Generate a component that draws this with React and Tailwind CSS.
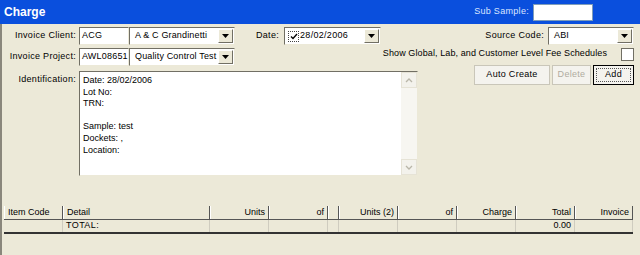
import React from 'react'

const font = { fontFamily: '"Liberation Sans", Arial, sans-serif' }

const Arrow = () => (
  <svg width="7" height="4" viewBox="0 0 7 4">
    <path d="M0 0h7L3.5 4z" fill="#000" />
  </svg>
)

const DropBtn = () => (
  <div className="w-[15px] h-full flex items-center justify-center bg-[#ece9d8] border border-t-white border-l-white border-b-[#716f64] border-r-[#716f64]">
    <Arrow />
  </div>
)

const Sunken = ({ className = '', children }) => (
  <div className={`bg-white border border-t-[#716f64] border-l-[#716f64] border-b-[#ece9d8] border-r-[#ece9d8] ${className}`}>
    {children}
  </div>
)

const Label = ({ children, className = '' }) => (
  <span className={`text-[9px] whitespace-nowrap text-black ${className}`}>{children}</span>
)

const Combo = ({ value, className = '' }) => (
  <Sunken className={`h-[18px] flex items-center p-[1px] ${className}`}>
    <span className="flex-1 pl-[4px] text-[9px] tracking-[0.15px] whitespace-nowrap overflow-hidden">{value}</span>
    <DropBtn />
  </Sunken>
)

const Input = ({ value, className = '' }) => (
  <Sunken className={`h-[18px] flex items-center pl-[2px] text-[9px] tracking-[0.2px] whitespace-nowrap overflow-hidden ${className}`}>{value}</Sunken>
)

const Btn = ({ children, disabled, focus, className = '' }) => (
  <div className={`h-[20px] flex items-center justify-center text-[9px] tracking-[0.3px] bg-[#f4f3ee] border ${focus ? 'border-black' : 'border-[#c9c6b9]'} ${className}`}>
    <div className={`w-full flex items-center justify-center ${focus ? 'border border-dotted border-[#555] m-[2px] h-[14px]' : 'h-full'} ${disabled ? 'text-[#b0ac9f]' : 'text-black'}`}>
      {children}
    </div>
  </div>
)

const cols = [
  { t: 'Item Code', w: 59, a: 'left' },
  { t: 'Detail', w: 147, a: 'left' },
  { t: 'Units', w: 59, a: 'right' },
  { t: 'of', w: 59, a: 'right' },
  { t: '', w: 11, a: 'right' },
  { t: 'Units (2)', w: 59, a: 'right' },
  { t: 'of', w: 59, a: 'right' },
  { t: 'Charge', w: 59, a: 'right' },
  { t: 'Total', w: 59, a: 'right' },
  { t: 'Invoice', w: 58, a: 'right' },
]
const rowVals = ['', 'TOTAL:', '', '', '', '', '', '', '0.00', '']

export default function App() {
  return (
    <div style={font} className="w-[640px] h-[255px] bg-[#ece9d8] overflow-hidden text-black">
      <div className="h-[24px] bg-[#0a4fdd] flex items-center justify-between pl-[4px] pr-[47px]">
        <span className="text-white font-bold text-[12px]">Charge</span>
        <div className="flex items-center gap-[4px]">
          <span className="text-[9px] tracking-[0.3px] text-[#dbe6ff]">Sub Sample:</span>
          <div className="w-[60px] h-[17px] bg-white border border-[#7f9db9]" />
        </div>
      </div>
      <div className="h-[231px] border-l-2 border-[#8a877c] flex flex-col">
        <div className="flex pt-[3px] h-[178px]">
          <div className="w-[418px] shrink-0 flex flex-col">
            <div className="flex items-center h-[18px]">
              <Label className="w-[74px] text-right tracking-[0.3px]">Invoice Client:</Label>
              <Input value="ACG" className="ml-[3px] w-[50px]" />
              <Combo value="A & C Grandinetti" className="w-[106px]" />
              <Label className="ml-[21px] tracking-[0.3px]">Date:</Label>
              <Sunken className="ml-[5px] w-[97px] h-[18px] flex items-center p-[1px]">
                <div className="ml-[2px] w-[11px] h-[11px] border border-dotted border-[#444] flex items-center justify-center">
                  <svg width="8" height="7" viewBox="0 0 8 7"><path d="M1 3.5l2 2L7 1" stroke="#000" strokeWidth="1.4" fill="none" /></svg>
                </div>
                <span className="flex-1 pl-[1px] text-[9px] tracking-[0.3px]">28/02/2006</span>
                <DropBtn />
              </Sunken>
            </div>
            <div className="flex items-center h-[18px] mt-[3px]">
              <Label className="w-[74px] text-right tracking-[0.3px]">Invoice Project:</Label>
              <Input value="AWL08651" className="ml-[3px] w-[50px]" />
              <Combo value="Quality Control Test" className="w-[106px]" />
            </div>
            <div className="flex mt-[5px]">
              <Label className="w-[74px] text-right mt-[2px] tracking-[0.3px]">Identification:</Label>
              <Sunken className="ml-[3px] w-[339px] h-[105px] flex">
                <div className="flex-1 pl-[3px] pt-[3px] text-[9px] leading-[11.6px]">
                  <div>Date: 28/02/2006</div>
                  <div>Lot No:</div>
                  <div>TRN:</div>
                  <div>&nbsp;</div>
                  <div>Sample: test</div>
                  <div>Dockets: ,</div>
                  <div>Location:</div>
                </div>
                <div className="w-[16px] bg-[#f7f6f1] flex flex-col justify-between">
                  <div className="h-[16px] bg-[#f3f2ec] border border-[#e6e3d6] flex items-center justify-center">
                    <svg width="8" height="5" viewBox="0 0 8 5"><path d="M1 4l3-3 3 3" stroke="#b9b6a9" strokeWidth="1.3" fill="none" /></svg>
                  </div>
                  <div className="h-[16px] bg-[#f3f2ec] border border-[#e6e3d6] flex items-center justify-center">
                    <svg width="8" height="5" viewBox="0 0 8 5"><path d="M1 1l3 3 3-3" stroke="#b9b6a9" strokeWidth="1.3" fill="none" /></svg>
                  </div>
                </div>
              </Sunken>
            </div>
          </div>
          <div className="w-[220px] min-w-0 flex flex-col items-end pr-[6px]">
            <div className="flex items-center h-[18px] shrink-0">
              <Label className="tracking-[0.3px]">Source Code:</Label>
              <Combo value="ABI" className="ml-[4px] w-[86px]" />
            </div>
            <div className="flex items-center mt-[2px] h-[14px] shrink-0">
              <Label className="tracking-[0.1px]">Show Global, Lab, and Customer Level Fee Schedules</Label>
              <div className="ml-[14px] w-[13px] h-[13px] bg-white border border-[#716f64]" />
            </div>
            <div className="flex mt-[4px] gap-[2px] shrink-0">
              <Btn className="w-[76px]">Auto Create</Btn>
              <Btn disabled className="w-[39px]">Delete</Btn>
              <Btn focus className="w-[41px]">Add</Btn>
            </div>
          </div>
        </div>
        <div className="mt-[4px] ml-[2px] w-[629px] text-[9px]">
          <div className="flex h-[14px] border-b border-[#555]">
            {cols.map((c, i) => (
              <div key={i} style={{ width: c.w }} className={`h-full flex items-center px-[3px] bg-[#ece9d8] border-r border-r-[#555] border-l border-l-white ${c.a === 'right' ? 'justify-end' : ''}`}>
                {c.t}
              </div>
            ))}
          </div>
          <div className="flex h-[14px] border-b-2 border-[#333]">
            {cols.map((c, i) => (
              <div key={i} style={{ width: c.w }} className={`h-full flex items-center px-[3px] border-r border-[#cfccbf] ${c.a === 'right' ? 'justify-end' : ''} ${i === 1 ? 'tracking-[0.4px]' : ''}`}>
                {rowVals[i]}
              </div>
            ))}
          </div>
        </div>
      </div>
    </div>
  )
}
